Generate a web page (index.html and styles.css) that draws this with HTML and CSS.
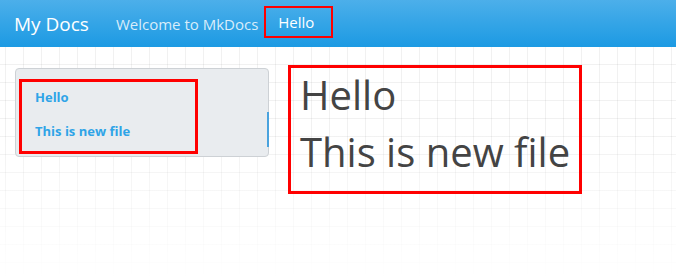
FILE: index.html
```html
<!DOCTYPE html>
<html lang="en">
<head>
  <meta charset="UTF-8" />
  <meta name="viewport" content="width=device-width, initial-scale=1.0"/>
  <title>My Docs</title>
  <link rel="stylesheet" href="styles.css">
</head>
<body>
  <nav class="navbar">
    <a class="brand" href="#">My Docs</a>
    <ul class="nav-links">
      <li><a href="#">Welcome to MkDocs</a></li>
      <li><a class="active" href="#">Hello</a></li>
    </ul>
  </nav>

  <div class="page">
    <aside class="sidebar">
      <ul class="toc">
        <li><a href="#hello">Hello</a></li>
        <li><a href="#this-is-new-file">This is new file</a></li>
      </ul>
    </aside>
    <main class="content">
      <h1 id="hello">Hello</h1>
      <h1 id="this-is-new-file">This is new file</h1>
    </main>
  </div>
</body>
</html>
```

FILE: styles.css
```css
html, body {
  height: 100%;
}
body {
  margin: 0;
  font-family: "Open Sans", "Noto Sans", sans-serif;
  background: #fff;
  color: #495057;
}
a {
  text-decoration: none;
}
ul {
  list-style: none;
  margin: 0;
  padding: 0;
}

/* top bar */
.navbar {
  height: 47px;
  display: flex;
  align-items: center;
  padding-left: 14px;
  background: linear-gradient(to bottom, #4cafea, #1c9ae3);
}
.brand {
  color: #fff;
  font-size: 19px;
  margin-right: 24px;
}
.nav-links {
  display: flex;
  align-items: center;
}
.nav-links a {
  display: block;
  color: rgba(255, 255, 255, 0.82);
  font-size: 15px;
  line-height: 20px;
  padding: 6px 3px;
}
.nav-links a.active {
  color: #fff;
  border: 2px solid #f00;
  margin-left: 3px;
  margin-top: -3px;
  padding: 4px 17px 4px 12px;
}

/* grid paper */
.page {
  min-height: calc(100% - 47px);
  display: flex;
  align-items: flex-start;
  padding: 21px 0 0 15px;
  box-sizing: border-box;
  background:
    linear-gradient(to bottom, rgba(255, 255, 255, 0) 35%, #fff 100%),
    linear-gradient(to right, rgba(0, 0, 0, 0.055) 1px, transparent 1px),
    linear-gradient(to bottom, rgba(0, 0, 0, 0.055) 1px, transparent 1px);
  background-size: 100% 100%, 18px 18px, 18px 18px;
  background-position: 0 0, 5px 17px, 5px 17px;
}

/* table of contents */
.sidebar {
  position: relative;
  width: 254px;
  height: 89px;
  background: #e9ecef;
  border: 1px solid #cdd1d5;
  border-radius: 4px;
  padding: 10px 0 0 3px;
  box-sizing: border-box;
}
.sidebar::after {
  content: "";
  position: absolute;
  right: -1px;
  top: 43px;
  width: 2px;
  height: 35px;
  background: #4aa3de;
}
.toc {
  width: 160px;
  border: 3px solid #f00;
  padding: 2px 0 6px 13px;
}
.toc a {
  display: block;
  color: #2fa4e7;
  font-size: 13px;
  font-weight: 700;
  padding: 5px 0;
  line-height: 17px;
}
.toc li + li a {
  margin-top: 7px;
}

/* page body */
.content {
  margin-left: 19px;
  margin-top: -3px;
  width: 279px;
  border: 3px solid #f00;
  padding: 1px 0 14px 9px;
}
.content h1 {
  margin: 0;
  font-weight: 400;
  font-size: 40px;
  line-height: 51px;
  color: #444;
}
.content h1 + h1 {
  margin-top: 6px;
}
```
